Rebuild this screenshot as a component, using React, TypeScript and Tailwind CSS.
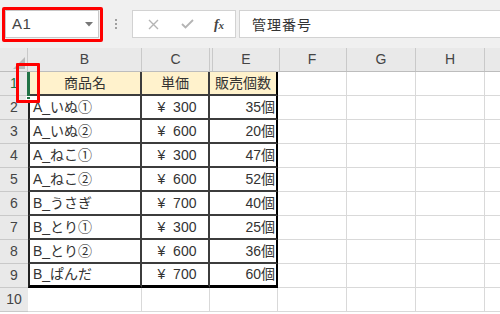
import React from "react";

const FONT = { fontFamily: '"Liberation Sans", "Noto Sans CJK JP", sans-serif' };

const data: [string, string, string][] = [
  ["A_いぬ①", "300", "35個"],
  ["A_いぬ②", "600", "20個"],
  ["A_ねこ①", "300", "47個"],
  ["A_ねこ②", "600", "52個"],
  ["B_うさぎ", "700", "40個"],
  ["B_とり①", "300", "25個"],
  ["B_とり②", "600", "36個"],
  ["B_ぱんだ", "700", "60個"],
];

function EmptyCells() {
  return (
    <>
      <div className="w-[69px] h-full border-r border-b border-[#d9d9d9]" />
      <div className="w-[69px] h-full border-r border-b border-[#d9d9d9]" />
      <div className="w-[69px] h-full border-r border-b border-[#d9d9d9]" />
      <div className="flex-1 h-full border-b border-[#d9d9d9]" />
    </>
  );
}

function RowHead({ n, green }: { n: number; green?: boolean }) {
  return (
    <div
      className={
        "w-[28px] h-full bg-[#e9e9e9] border-b border-[#c9c9c9] flex items-center justify-center text-[14px] " +
        (green ? "text-[#217346]" : "text-[#444]")
      }
    >
      {n}
    </div>
  );
}

export default function App() {
  return (
    <div className="w-[500px] h-[314px] overflow-hidden bg-white relative" style={FONT}>
      {/* toolbar */}
      <div className="h-[48px] bg-[#f0f0f0] flex items-start pt-[10px]">
        <div className="ml-[5px] w-[94px] h-[28px] bg-white border border-[#c8c8c8] flex items-center justify-between pl-[6px] pr-[5px]">
          <span className="text-[15px] text-[#444] tracking-[0.5px]">A1</span>
          <svg width="8" height="5" viewBox="0 0 8 5">
            <path d="M0 0 L8 0 L4 4.5 Z" fill="#777" />
          </svg>
        </div>
        <div className="w-[33px] h-[28px] flex flex-col items-center justify-center gap-[2px]">
          <div className="w-[2px] h-[2px] bg-[#a0a0a0]" />
          <div className="w-[2px] h-[2px] bg-[#a0a0a0]" />
          <div className="w-[2px] h-[2px] bg-[#a0a0a0]" />
        </div>
        <div className="w-[104px] h-[28px] bg-white border border-[#d2d2d2] flex items-center">
          <div className="w-[36px] flex justify-center pl-[4px]">
            <svg width="11" height="11" viewBox="0 0 11 11">
              <path d="M1 1 L10 10 M10 1 L1 10" stroke="#b4b4b4" strokeWidth="1.4" />
            </svg>
          </div>
          <div className="w-[36px] flex justify-center">
            <svg width="13" height="10" viewBox="0 0 13 10">
              <path d="M1 5 L4.5 8.5 L12 1" stroke="#b4b4b4" strokeWidth="1.8" fill="none" />
            </svg>
          </div>
          <div className="w-[28px] flex justify-center">
            <span
              className="italic font-bold text-[14px] text-[#444]"
              style={{ fontFamily: '"Liberation Serif", serif' }}
            >
              f<span className="text-[11px]">x</span>
            </span>
          </div>
        </div>
        <div className="ml-[3px] flex-1 h-[28px] bg-white border border-[#d2d2d2] border-r-0 flex items-center pl-[12px]">
          <span className="text-[14px] text-[#333] tracking-[1px]" style={{ fontFamily: '"Noto Sans CJK JP", sans-serif' }}>
            管理番号
          </span>
        </div>
      </div>

      {/* column headers */}
      <div className="h-[24px] flex bg-[#e9e9e9] border-b border-[#bdbdbd] text-[14px] text-[#444]">
        <div className="w-[28px] h-full border-r border-[#c9c9c9] relative">
          <svg className="absolute right-[2px] bottom-[2px]" width="12" height="12" viewBox="0 0 12 12">
            <path d="M12 0 L12 12 L0 12 Z" fill="#b9b9b9" />
          </svg>
        </div>
        <div className="w-[114px] h-full border-r border-[#c9c9c9] flex items-center justify-center">B</div>
        <div className="w-[68px] h-full border-r border-[#c9c9c9] flex items-center justify-center">C</div>
        <div className="w-[68px] h-full border-l border-r border-[#c9c9c9] ml-[2px] -mr-[2px] flex items-center justify-center">E</div>
        <div className="w-[69px] h-full border-r border-[#c9c9c9] flex items-center justify-center">F</div>
        <div className="w-[69px] h-full border-r border-[#c9c9c9] flex items-center justify-center">G</div>
        <div className="w-[69px] h-full border-r border-[#c9c9c9] flex items-center justify-center">H</div>
        <div className="flex-1" />
      </div>

      {/* row 1 */}
      <div className="h-[24px] flex text-[14px] text-[#333]">
        <RowHead n={1} green />
        <div className="w-[114px] h-full bg-[#fff2cc] border-l-2 border-l-[#222] border-r-2 border-b-2 border-[#3c3c3c] flex items-center justify-center">
          商品名
        </div>
        <div className="w-[68px] h-full bg-[#fff2cc] border-r-2 border-b-2 border-[#3c3c3c] flex items-center justify-center">
          単価
        </div>
        <div className="w-[68px] h-full bg-[#fff2cc] border-r-2 border-b-2 border-[#3c3c3c] border-r-black flex items-center justify-center">
          販売個数
        </div>
        <EmptyCells />
      </div>

      {data.map(([name, price, qty], i) => {
        const last = i === data.length - 1;
        const bb = last ? "border-b-[3px] border-b-black" : "border-b-2";
        return (
          <div key={i} className="h-[24px] flex text-[14px] text-[#333]">
            <RowHead n={i + 2} />
            <div className={"w-[114px] h-full border-l-2 border-l-[#222] border-r-2 border-[#3c3c3c] flex items-center pl-[3px] " + bb}>
              {name}
            </div>
            <div className={"w-[68px] h-full border-r-2 border-[#3c3c3c] flex items-center justify-center whitespace-pre pl-[4px] " + bb}>
              {"¥  " + price}
            </div>
            <div className={"w-[68px] h-full border-r-2 border-[#3c3c3c] border-r-black flex items-center justify-end pr-[1px] " + bb}>
              {qty}
            </div>
            <EmptyCells />
          </div>
        );
      })}

      {/* row 10 */}
      <div className="h-[24px] flex text-[14px] text-[#333]">
        <RowHead n={10} />
        <div className="w-[114px] h-full border-r border-b border-[#d9d9d9]" />
        <div className="w-[68px] h-full border-r border-b border-[#d9d9d9]" />
        <div className="w-[68px] h-full border-r border-b border-[#d9d9d9]" />
        <EmptyCells />
      </div>

      {/* selected hidden cell A1 indicator */}
      <div className="absolute left-[27px] top-[72px] w-[3px] h-[26px] bg-[#217346]" />
      <div className="absolute left-[26px] top-[96px] w-[5px] h-[4px] bg-[#217346] border border-white" />

      {/* red highlight boxes */}
      <div className="absolute left-[2px] top-[7px] w-[101px] h-[35px] border-[3px] border-[#ff0000] rounded-[2px]" />
      <div className="absolute left-[16px] top-[63px] w-[24px] h-[40px] border-[3px] border-[#ff0000] rounded-[1px]" />
    </div>
  );
}
